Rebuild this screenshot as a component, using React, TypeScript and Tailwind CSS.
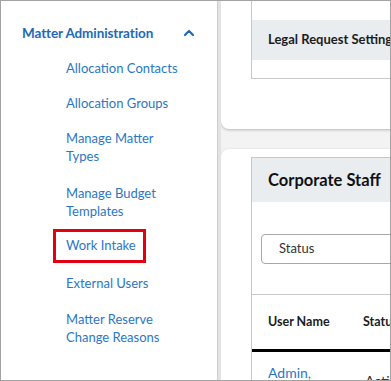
import React from 'react';
import { ChevronUp } from 'lucide-react';

const items: { label: string[]; mark?: boolean; top: string }[] = [
    { label: ['Allocation Contacts'], top: 'mt-0' },
    { label: ['Allocation Groups'], top: 'mt-[17px]' },
    { label: ['Manage Matter', 'Types'], top: 'mt-[17px]' },
    { label: ['Manage Budget', 'Templates'], top: 'mt-[19px]' },
    { label: ['Work Intake'], mark: true, top: 'mt-[16px]' },
    { label: ['External Users'], top: 'mt-[20px]' },
    { label: ['Matter Reserve', 'Change Reasons'], top: 'mt-[18px]' },
];

export default function App() {
    return (
        <div
            className="w-[391px] h-[381px] border border-[#a3a3a3] flex overflow-hidden bg-white"
            style={{ fontFamily: 'Lato, "Open Sans", sans-serif' }}
        >
            {/* left nav */}
            <div className="w-[216px] shrink-0 bg-white pt-[22px]">
                <div className="flex items-center justify-between pl-[21px] pr-[20px] h-[20px]">
                    <span className="text-[13.5px] font-bold text-[#1d6ab8] tracking-[-0.1px]">Matter Administration</span>
                    <ChevronUp className="w-[16px] h-[16px] text-[#1d6ab8]" strokeWidth={3.2} />
                </div>
                <div className="flex flex-col pl-[65px] mt-[16px]">
                    {items.map((it) => (
                        <div key={it.label[0]} className={`text-[13px] leading-[18px] text-[#2a77c6] ${it.top}`}>
                            {it.mark ? (
                                <span className="relative inline-block">
                                    {it.label[0]}
                                    <span className="absolute -left-[13px] -right-[10px] -top-[7px] -bottom-[9px] border-[3px] border-[#e3000f]" />
                                </span>
                            ) : (
                                it.label.map((l) => <div key={l}>{l}</div>)
                            )}
                        </div>
                    ))}
                </div>
            </div>

            {/* divider */}
            <div className="w-[4px] shrink-0 border-l border-[#cdcdcd] bg-[#e3e3e3]" />

            {/* main */}
            <div className="flex-1 bg-[#f3f3f3] overflow-hidden">
                <div className="w-[260px] bg-white rounded-bl-[8px] shadow-[0_1px_3px_rgba(0,0,0,0.25)] pl-[30px] pb-[50px]">
                    <div className="border-l border-b border-[#c8c8c8] pt-[19px] pb-[18px]">
                        <div className="h-[40px] bg-[#e9edf0] flex items-center pl-[16px] text-[13px] font-bold text-[#1c1c1c] whitespace-nowrap">
                            Legal Request Settings
                        </div>
                    </div>
                </div>

                <div className="mt-[20px] w-[260px] bg-white rounded-tl-[8px] shadow-[0_1px_3px_rgba(0,0,0,0.25)] pl-[30px] pt-[8px] h-[300px]">
                    <div className="border-l border-t border-[#c8c8c8]">
                        <div className="h-[44px] bg-[#e9edf0] flex items-center pl-[16px] text-[16.5px] font-bold text-[#111] whitespace-nowrap">
                            Corporate Staff
                        </div>
                        <div className="pt-[32px] pl-[9px] pb-[30px] border-b border-[#c8c8c8]">
                            <div className="h-[30px] border border-[#a8a8a8] rounded-[4px] flex items-center pl-[17px] text-[13px] text-[#333]">
                                Status
                            </div>
                        </div>
                        <div className="h-[57px] flex items-center pl-[16px] text-[12.5px] font-bold text-[#1c1c1c] whitespace-nowrap border-b-[3px] border-black">
                            <span className="w-[95px]">User Name</span>
                            <span>Status</span>
                        </div>
                        <div className="flex pl-[16px] pt-[10px] text-[14px] whitespace-nowrap">
                            <span className="w-[97px] text-[#2a77c6]">Admin,</span>
                            <span className="text-[#333] pt-[8px]">Active</span>
                        </div>
                    </div>
                </div>
            </div>
        </div>
    );
}
